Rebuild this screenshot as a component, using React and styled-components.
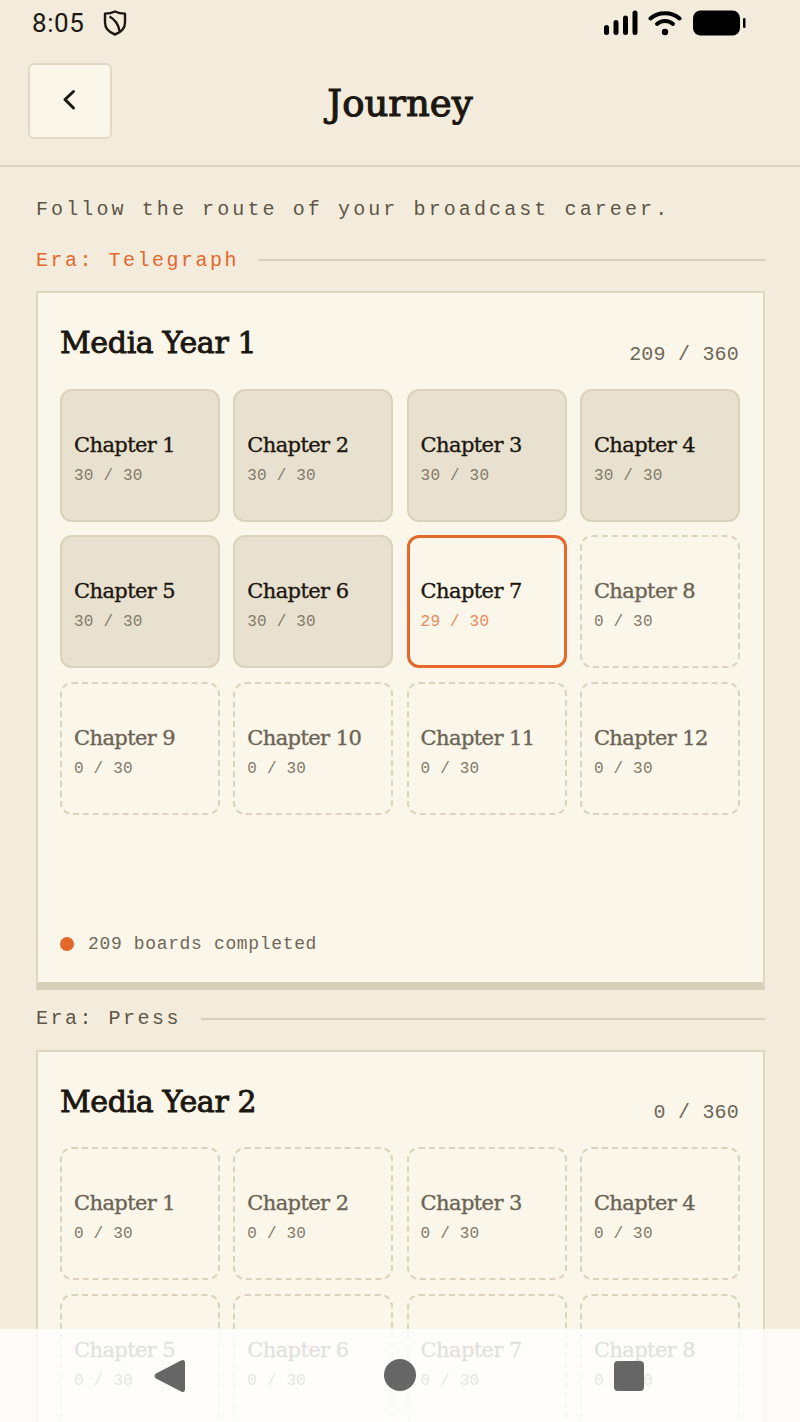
import React from 'react';
import styled, { createGlobalStyle } from 'styled-components';

const GlobalStyle = createGlobalStyle`
    html, body {
        margin: 0;
        padding: 0;
        background: #f3ecdc;
    }
    * {
        box-sizing: border-box;
    }
`;

const serif = `"DejaVu Serif", "Liberation Serif", serif`;
const mono = `"Liberation Mono", "DejaVu Sans Mono", monospace`;

const years = [
    {
        era: 'Era: Telegraph',
        active: true,
        title: 'Media Year 1',
        total: '209 / 360',
        footer: '209 boards completed',
        chapters: [30, 30, 30, 30, 30, 30, 29, 0, 0, 0, 0, 0],
    },
    {
        era: 'Era: Press',
        active: false,
        title: 'Media Year 2',
        total: '0 / 360',
        // the third row of this card is below the fold
        chapters: [0, 0, 0, 0, 0, 0, 0, 0],
    },
];

function tileState(done) {
    if (done === 30) return 'done';
    if (done > 0) return 'current';
    return 'locked';
}

function App() {
    return (
        <Screen>
            <GlobalStyle />
            <StatusBar>
                <StatusLeft>
                    <Clock>8:05</Clock>
                    <svg width="24" height="26" viewBox="0 0 24 26" fill="none" stroke="#1c1710" strokeWidth="2.4" strokeLinejoin="round">
                        <path d="M12 1.500 C15 3 18 3.600 22 3.600 V12.500 C22 18.500 17.500 22.500 12 24.500 C6.500 22.500 2 18.500 2 12.500 V3.600 C6 3.600 9 3 12 1.500 Z" />
                        <path d="M6.500 6.500 C11 9 15.500 14.500 16.500 21" />
                    </svg>
                </StatusLeft>
                <StatusRight>
                    <svg width="34" height="26" viewBox="0 0 34 26" fill="#000">
                        <rect x="0" y="15" width="5" height="10" rx="2.500" />
                        <rect x="9.500" y="10" width="5" height="15" rx="2.500" />
                        <rect x="19" y="5.500" width="5" height="19.500" rx="2.500" />
                        <rect x="28.500" y="0.500" width="5" height="24.500" rx="2.500" />
                    </svg>
                    <svg width="34" height="26" viewBox="0 0 34 26" fill="none" stroke="#000" strokeWidth="4" strokeLinecap="round">
                        <path d="M2.500 8.500 C10 1.500 24 1.500 31.500 8.500" />
                        <path d="M9 14 C13.500 10 20.500 10 25 14" />
                        <circle cx="17" cy="22" r="2.200" fill="#000" stroke="#000" strokeWidth="2" />
                    </svg>
                    <svg width="54" height="26" viewBox="0 0 54 26" fill="#000">
                        <rect x="1" y="0.500" width="47" height="25" rx="7.500" />
                        <rect x="51" y="8" width="2.500" height="10" rx="1.200" />
                    </svg>
                </StatusRight>
            </StatusBar>

            <Header>
                <BackButton>
                    <svg width="20" height="24" viewBox="0 0 20 24" fill="none" stroke="#1c1710" strokeWidth="3" strokeLinecap="round" strokeLinejoin="round">
                        <path d="M14.500 3.500 L6 11.500 L14.500 20" />
                    </svg>
                </BackButton>
                <PageTitle>Journey</PageTitle>
            </Header>

            <Content>
                <Intro>Follow the route of your broadcast career.</Intro>
                {years.map((year) => (
                    <Section key={year.title}>
                        <EraRow>
                            <EraLabel $active={year.active}>{year.era}</EraLabel>
                            <EraLine />
                        </EraRow>
                        <YearCard>
                            <CardHeader>
                                <YearTitle>{year.title}</YearTitle>
                                <YearTotal>{year.total}</YearTotal>
                            </CardHeader>
                            <TileGrid>
                                {year.chapters.map((done, i) => {
                                    const state = tileState(done);
                                    return (
                                        <Tile key={i} $state={state}>
                                            <TileName $state={state}>Chapter {i + 1}</TileName>
                                            <TileCount $state={state}>{done} / 30</TileCount>
                                        </Tile>
                                    );
                                })}
                            </TileGrid>
                            {year.footer && (
                                <CardFooter>
                                    <Dot />
                                    <FooterText>{year.footer}</FooterText>
                                </CardFooter>
                            )}
                        </YearCard>
                    </Section>
                ))}
            </Content>

            <NavBar>
                <svg width="32" height="34" viewBox="0 0 32 34" fill="#666">
                    <path d="M27 1.500 C29.500 0 31 1.500 31 4 V30 C31 32.500 29.500 34 27 32.500 L2 19.500 C0 18 0 16 2 14.500 Z" />
                </svg>
                <NavCircle />
                <NavSquare />
            </NavBar>
        </Screen>
    );
}

export default App;

const Screen = styled.div`
    position: relative;
    width: 800px;
    height: 1422px;
    overflow: hidden;
    background: #f3ecdc;
    color: #1c1710;
`;

const StatusBar = styled.div`
    height: 46px;
    padding: 0 54px 0 32px;
    display: flex;
    align-items: center;
    justify-content: space-between;
`;

const StatusLeft = styled.div`
    display: flex;
    align-items: center;
    gap: 18px;
`;

const Clock = styled.span`
    font-family: Roboto, sans-serif;
    font-size: 26px;
    letter-spacing: 0.6px;
    color: #1c1710;
`;

const StatusRight = styled.div`
    display: flex;
    align-items: center;
    gap: 10px;
`;

const Header = styled.div`
    position: relative;
    height: 121px;
    padding: 17px 28px 0;
    border-bottom: 2px solid #dcd4bf;
`;

const BackButton = styled.div`
    width: 84px;
    height: 76px;
    display: flex;
    align-items: center;
    justify-content: center;
    background: #fbf6ea;
    border: 2px solid #e2d9c3;
    border-radius: 6px;
    svg {
        transform: translate(-1px, -1px);
    }
`;

const PageTitle = styled.div`
    position: absolute;
    left: 0;
    right: 0;
    top: 33px;
    text-align: center;
    font-family: ${serif};
    font-size: 37px;
    line-height: 50px;
    -webkit-text-stroke: 1.100px #1c1710;
    color: #1c1710;
`;

const Content = styled.div`
    padding: 30px 35px 0 36px;
`;

const Intro = styled.div`
    font-family: ${mono};
    font-size: 20px;
    line-height: 26px;
    letter-spacing: 3.100px;
    color: #5e5646;
    margin-bottom: 25px;
`;

const Section = styled.div`
    margin-bottom: 16.800px;
`;

const EraRow = styled.div`
    display: flex;
    align-items: center;
    gap: 20px;
    margin-bottom: 19px;
    height: 24px;
`;

const EraLabel = styled.div`
    font-family: ${mono};
    font-size: 20px;
    letter-spacing: 2.500px;
    color: ${(p) => (p.$active ? '#e4682c' : '#5e5646')};
`;

const EraLine = styled.div`
    flex: 1;
    height: 2px;
    background: #d9d0ba;
`;

const YearCard = styled.div`
    min-height: 699px;
    padding: 24px 22px 0;
    display: flex;
    flex-direction: column;
    background: #fbf6ea;
    border: 2px solid #e0d7c1;
    border-bottom: 8px solid #d9d0ba;
`;

const CardHeader = styled.div`
    display: flex;
    align-items: flex-end;
    justify-content: space-between;
    height: 71.600px;
    padding-bottom: 22px;
`;

const YearTitle = styled.div`
    font-family: ${serif};
    font-size: 30px;
    letter-spacing: -0.350px;
    -webkit-text-stroke: 0.900px #1c1710;
    line-height: 50px;
    color: #1c1710;
    align-self: flex-start;
    margin-top: 1px;
`;

const YearTotal = styled.div`
    font-family: ${mono};
    font-size: 20px;
    color: #6f6757;
    letter-spacing: 0.200px;
    line-height: 24px;
    margin-right: 2px;
`;

const TileGrid = styled.div`
    display: grid;
    grid-template-columns: repeat(4, 160px);
    grid-auto-rows: 133px;
    column-gap: 13.300px;
    row-gap: 13.500px;
`;

const Tile = styled.div`
    display: flex;
    flex-direction: column;
    justify-content: center;
    padding: ${(p) => (p.$state === 'current' ? '5px 11px 0' : '5px 12px 0')};
    border-radius: 12px;
    border: ${(p) =>
        p.$state === 'done'
            ? '2px solid #dbd2bb'
            : p.$state === 'current'
            ? '3px solid #e4682c'
            : '2px dashed #dcd3bc'};
    background: ${(p) => (p.$state === 'done' ? '#e9e1cf' : 'transparent')};
`;

const TileName = styled.div`
    font-family: ${serif};
    font-size: 21px;
    letter-spacing: -0.600px;
    line-height: 30px;
    -webkit-text-stroke: 0.35px ${(p) => (p.$state === 'locked' ? '#6b6454' : '#1c1710')};
    color: ${(p) => (p.$state === 'locked' ? '#6b6454' : '#1c1710')};
`;

const TileCount = styled.div`
    margin-top: 6px;
    font-family: ${mono};
    font-size: 16px;
    line-height: 20px;
    letter-spacing: 0.200px;
    color: ${(p) => (p.$state === 'current' ? '#e98a5c' : '#827a69')};
`;

const CardFooter = styled.div`
    margin-top: auto;
    height: 50px;
    display: flex;
    align-items: flex-start;
    gap: 14px;
`;

const Dot = styled.div`
    width: 14px;
    height: 14px;
    margin-top: 5px;
    border-radius: 50%;
    background: #e4682c;
`;

const FooterText = styled.div`
    font-family: ${mono};
    font-size: 18px;
    line-height: 26px;
    letter-spacing: 0.650px;
    color: #6f6757;
    margin-top: -1px;
`;

const NavBar = styled.div`
    position: absolute;
    left: 0;
    right: 0;
    bottom: 0;
    height: 93px;
    padding: 30px 156px 0 154px;
    display: flex;
    align-items: flex-start;
    justify-content: space-between;
    background: rgba(255, 255, 255, 0.8);
`;

const NavCircle = styled.div`
    width: 32px;
    height: 32px;
    border-radius: 50%;
    background: #666;
`;

const NavSquare = styled.div`
    width: 30px;
    height: 30px;
    border-radius: 4px;
    background: #666;
    margin-top: 2px;
`;
